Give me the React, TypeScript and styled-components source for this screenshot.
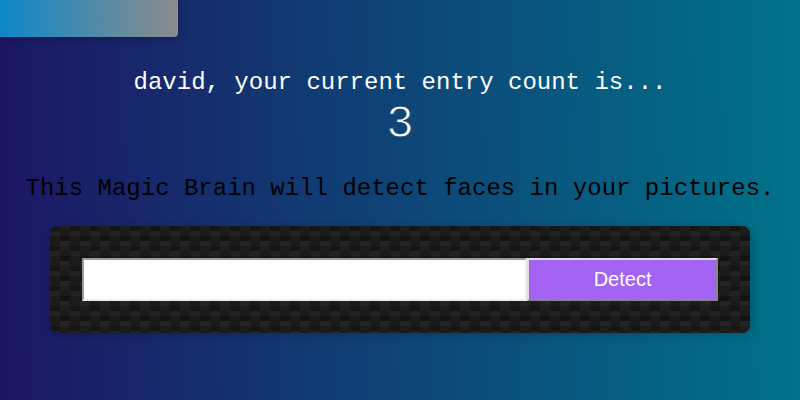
import React from 'react';
import styled, { createGlobalStyle } from 'styled-components';

const Global = createGlobalStyle`
  * { box-sizing: border-box; }
  html { min-height: 100%; }
  body {
    margin: 0;
    height: 400px;
    overflow: hidden;
    font-family: "Courier New", "Liberation Mono", monospace;
    background: linear-gradient(89deg, #1c1664 0%, #00738a 100%);
  }
`;
const Tilt = styled.div`
  width: 178px;
  height: 37px;
  margin-bottom: 32px;
  border-radius: 0 0 4px 0;
  background: linear-gradient(89deg, #0c88c8 0%, #8c8c8c 100%);
  box-shadow: 2px 2px 8px 0 rgba(0, 0, 0, 0.2);
`;
const Rank = styled.div`
  color: white;
  text-align: center;
`;
const Caption = styled.div`
  font-size: 24px;
  line-height: 27px;
`;
const Count = styled.div`
  height: 55px;
  padding-top: 2px;
  font-size: 46px;
  line-height: 54px;
  -webkit-text-stroke: 1px #0f4575;
`;
const Intro = styled.p`
  margin: 24px 0;
  font-size: 24px;
  line-height: 27px;
  text-align: center;
  color: black;
`;
const Form = styled.form`
  width: 700px;
  height: 107px;
  margin: 0 auto;
  padding: 32px;
  display: flex;
  border-radius: 8px;
  box-shadow: 2px 2px 8px 0 rgba(0, 0, 0, 0.2);
  background:
    linear-gradient(27deg, #151515 5px, transparent 5px) 0 5px,
    linear-gradient(207deg, #151515 5px, transparent 5px) 10px 0,
    linear-gradient(27deg, #222 5px, transparent 5px) 0 10px,
    linear-gradient(207deg, #222 5px, transparent 5px) 10px 5px,
    linear-gradient(90deg, #1b1b1b 10px, transparent 10px),
    linear-gradient(#1d1d1d 25%, #1a1a1a 25%, #1a1a1a 50%, transparent 50%, transparent 75%, #242424 75%, #242424);
  background-color: #131313;
  background-size: 20px 20px;
`;
const UrlInput = styled.input`
  width: 445.2px;
  height: 43px;
  padding: 8px;
  border: 2px solid;
  border-color: #9a9a9a #eee #eee #9a9a9a;
  background: white;
  font: 20px "Liberation Sans", Arial, sans-serif;
`;
const Detect = styled.button`
  width: 190.8px;
  height: 43px;
  padding: 6px 14px;
  border: 2px solid;
  border-color: #ddd #888 #888 #ddd;
  background: #a463f2;
  color: white;
  font: 20px "Liberation Sans", Arial, sans-serif;
`;

export default function App() {
  return (
    <>
      <Global />
      <Tilt />
      <Rank>
        <Caption>david, your current entry count is...</Caption>
        <Count>3</Count>
      </Rank>
      <Intro>This Magic Brain will detect faces in your pictures.</Intro>
      <Form onSubmit={(e) => e.preventDefault()}>
        <UrlInput type="text" />
        <Detect>Detect</Detect>
      </Form>
    </>
  );
}
